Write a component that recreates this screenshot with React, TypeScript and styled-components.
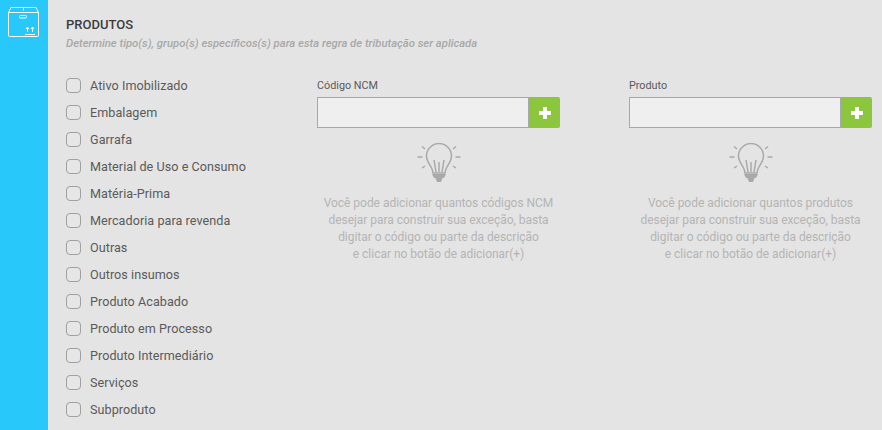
import * as React from "react";
import styled, { createGlobalStyle } from "styled-components";

const GlobalStyle = createGlobalStyle`
  html, body {
    margin: 0;
    padding: 0;
    height: 430px;
    overflow: hidden;
    background: #e4e4e4;
    font-family: "Roboto", "Liberation Sans", sans-serif;
  }
`;

const Page = styled.div`
  display: flex;
  width: 882px;
  height: 430px;
  overflow: hidden;
`;

const Sidebar = styled.div`
  width: 48px;
  flex-shrink: 0;
  background: #29c8fb;
  display: flex;
  justify-content: center;
  padding-top: 6px;
  box-sizing: border-box;
`;

const Main = styled.div`
  flex: 1;
  padding: 17px 0 0 18px;
`;

const Title = styled.div`
  color: #3c3c3c;
  font-size: 13px;
  font-weight: 500;
  line-height: 16px;
`;

const Subtitle = styled.div`
  color: #a8a8a8;
  font-size: 11.3px;
  font-style: italic;
  font-weight: 500;
  line-height: 14px;
  margin-top: 4px;
`;

const Columns = styled.div`
  display: flex;
  margin-top: 22px;
`;

const CheckList = styled.div`
  width: 251px;
  display: flex;
  flex-direction: column;
  gap: 7px;
  padding-top: 2px;
`;

const CheckRow = styled.label`
  display: flex;
  align-items: center;
  gap: 9px;
  height: 20px;
  color: #5a5a5a;
  font-size: 12.6px;
  letter-spacing: 0.05px;
`;

const CheckBox = styled.span`
  width: 13px;
  height: 13px;
  border: 1px solid #a0a0a0;
  border-radius: 4px;
  background: #e6e6e6;
`;

const Finder = styled.div`
  width: 243px;
  margin-right: 69px;
  padding-top: 6px;
  display: flex;
  flex-direction: column;
`;

const FieldLabel = styled.div`
  color: #5a5a5a;
  font-size: 10.8px;
  line-height: 14px;
  margin-bottom: 4px;
`;

const InputRow = styled.div`
  display: flex;
  height: 31px;
`;

const TextInput = styled.input`
  flex: 1;
  min-width: 0;
  box-sizing: border-box;
  height: 31px;
  border: 1px solid #a5a9ad;
  background: #efefef;
  outline: none;
  padding: 0 8px;
`;

const AddButton = styled.button`
  width: 31px;
  height: 31px;
  padding: 0;
  border: 0;
  border-radius: 0 2px 2px 0;
  background: #8cc63c;
  display: flex;
  align-items: center;
  justify-content: center;
`;

const Hint = styled.div`
  display: flex;
  flex-direction: column;
  align-items: center;
  margin-top: 15px;
`;

const HintText = styled.div`
  margin-top: 12px;
  width: 243px;
  text-align: center;
  color: #b4b4b4;
  font-size: 12px;
  line-height: 17px;
  letter-spacing: -0.03px;
`;

const items = [
  "Ativo Imobilizado",
  "Embalagem",
  "Garrafa",
  "Material de Uso e Consumo",
  "Matéria-Prima",
  "Mercadoria para revenda",
  "Outras",
  "Outros insumos",
  "Produto Acabado",
  "Produto em Processo",
  "Produto Intermediário",
  "Serviços",
  "Subproduto",
];

function BoxIcon() {
  return (
    <svg width="32" height="32" viewBox="0 0 32 32" fill="none" stroke="#fff" strokeWidth="1">
      <path d="M0.500 6.500L3 1.500h25l2.500 5v23a1 1 0 0 1-1 1h-28a1 1 0 0 1-1-1z" />
      <path d="M0.500 6.500h30" />
      <path d="M15.500 1.500v3" />
      <rect x="11.500" y="9.500" width="7" height="2.500" rx="1" />
      <path d="M17 28.500h10M19.500 26v-5M24.500 26v-5M18 23l1.500-2 1.500 2M23 23l1.500-2 1.500 2" />
    </svg>
  );
}

function PlusIcon() {
  return (
    <svg width="12" height="12" viewBox="0 0 12 12" fill="#fff">
      <path d="M4 0h4v4h4v4H8v4H4V8H0V4h4z" />
    </svg>
  );
}

function BulbIcon() {
  return (
    <svg width="44" height="40" viewBox="0 0 44 40" fill="none" stroke="#a9a9a9" strokeWidth="1.500">
      <path d="M16 30C16 24 9.500 20 9.500 13a12.500 12.500 0 0 1 25 0C34.500 20 28 24 28 30z" />
      <path d="M19 29l-2-12M25 29l2-12M22 29v-10" />
      <path d="M0.500 14h5M38.500 14h5M5 3.500l3 2.500M39 3.500l-3 2.500M5 25l3-2M39 25l-3-2" />
      <path d="M15 31h14l-2 4h-10z" fill="#a9a9a9" stroke="none" />
      <path d="M18.500 35h7l-1.500 4h-4z" fill="#a9a9a9" stroke="none" />
    </svg>
  );
}

function FinderColumn({ label, hint }: { label: string; hint: string[] }) {
  return (
    <Finder>
      <FieldLabel>{label}</FieldLabel>
      <InputRow>
        <TextInput />
        <AddButton>
          <PlusIcon />
        </AddButton>
      </InputRow>
      <Hint>
        <BulbIcon />
        <HintText>
          {hint.map((line) => (
            <div key={line}>{line}</div>
          ))}
        </HintText>
      </Hint>
    </Finder>
  );
}

export default function App() {
  return (
    <Page>
      <GlobalStyle />
      <Sidebar>
        <BoxIcon />
      </Sidebar>
      <Main>
        <Title>PRODUTOS</Title>
        <Subtitle>Determine tipo(s), grupo(s) específicos(s) para esta regra de tributação ser aplicada</Subtitle>
        <Columns>
          <CheckList>
            {items.map((item) => (
              <CheckRow key={item}>
                <CheckBox />
                {item}
              </CheckRow>
            ))}
          </CheckList>
          <FinderColumn
            label="Código NCM"
            hint={[
              "Você pode adicionar quantos códigos NCM",
              "desejar para construir sua exceção, basta",
              "digitar o código ou parte da descrição",
              "e clicar no botão de adicionar(+)",
            ]}
          />
          <FinderColumn
            label="Produto"
            hint={[
              "Você pode adicionar quantos produtos",
              "desejar para construir sua exceção, basta",
              "digitar o código ou parte da descrição",
              "e clicar no botão de adicionar(+)",
            ]}
          />
        </Columns>
      </Main>
    </Page>
  );
}
